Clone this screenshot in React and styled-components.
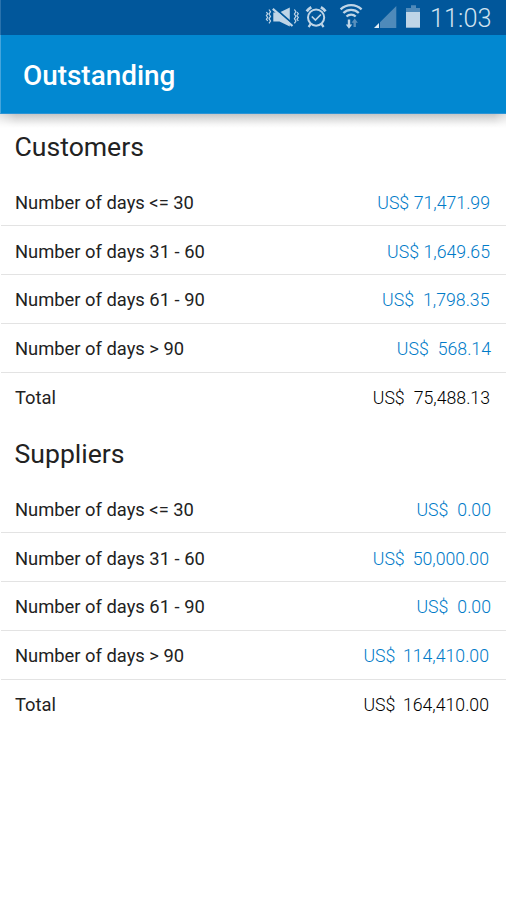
import React from "react";
import styled, { createGlobalStyle } from "styled-components";

const GlobalStyle = createGlobalStyle`
  * { box-sizing: border-box; }
  body {
    margin: 0;
    background: #fff;
    font-family: Roboto, "Liberation Sans", sans-serif;
    color: #222;
  }
`;

const Screen = styled.div`
  width: 506px;
  height: 900px;
  overflow: hidden;
  background: #fff;
`;

const StatusBar = styled.header`
  display: flex;
  height: 35px;
  padding-left: 264px;
  background: #01579b;
  border-left: 1px solid #2a72ac;
`;

const StatusIcons = styled.svg`
  flex: none;
  width: 160px;
  height: 35px;
`;

const Clock = styled.time`
  margin-left: 5px;
  font-size: 25.3px;
  font-weight: 300;
  line-height: 38px;
  color: #d2e3f0;
`;

const AppBar = styled.div`
  display: flex;
  align-items: center;
  height: 79px;
  padding: 3px 0 0 22px;
  background: #0288d1;
  border-left: 1px solid #45a5dc;
  border-bottom: 1px solid #2b94d6;
`;

const Title = styled.h1`
  margin: 0;
  font-size: 27.9px;
  font-weight: 500;
  line-height: 32px;
  color: #fff;
`;

const Shadow = styled.div`
  height: 14px;
  margin-bottom: -14px;
  background: linear-gradient(#c6c6c6, #dedede 35%, #f6f6f6 75%, #fff);
  mask-image: linear-gradient(90deg, rgba(0, 0, 0, 0.5), #000 16px, #000 calc(100% - 12px), rgba(0, 0, 0, 0.5));
`;

const Section = styled.section`
  height: 307px;
`;

const Heading = styled.h2`
  margin: 0;
  height: 63.5px;
  padding: 17px 0 0 14.5px;
  font-size: 26.6px;
  font-weight: 400;
  line-height: 32px;
`;

const Row = styled.div`
  display: flex;
  justify-content: space-between;
  align-items: center;
  height: 48.75px;
  margin-left: 1px;
  padding: 0 ${(p) => p.$inset}px 0 14px;
  border-bottom: 1px solid ${(p) => (p.$total ? "transparent" : "#e3e3e3")};
  line-height: 24px;
`;

const Label = styled.span`
  padding-top: 3px;
  font-size: 18.35px;
`;

const Amount = styled.span`
  display: flex;
  gap: ${(p) => p.$gap}px;
  padding-top: 3px;
  font-size: 17.7px;
  font-weight: 300;
  color: ${(p) => (p.$total ? "#000" : "#007bc8")};
`;

const sections = [
  {
    title: "Customers",
    rows: [
      ["Number of days <= 30", "71,471.99", 16, 4.5],
      ["Number of days 31 - 60", "1,649.65", 16, 4.5],
      ["Number of days 61 - 90", "1,798.35", 16.5, 9],
      ["Number of days > 90", "568.14", 15, 9],
      ["Total", "75,488.13", 16, 9],
    ],
  },
  {
    title: "Suppliers",
    rows: [
      ["Number of days <= 30", "0.00", 15, 9],
      ["Number of days 31 - 60", "50,000.00", 17, 8],
      ["Number of days 61 - 90", "0.00", 15, 9],
      ["Number of days > 90", "114,410.00", 17, 7.5],
      ["Total", "164,410.00", 17, 7.5],
    ],
  },
];

function Icons() {
  return (
    <StatusIcons viewBox="265 0 160 35" aria-hidden="true">
      <g fill="none" stroke="#bfd5e7" strokeWidth="1.2">
        <path d="M266.4 12l1.3 1.8-1.3 1.8 1.3 1.8-1.3 1.8 1.3 1.8M269 9.5l1.5 2.3-1.5 2.3 1.5 2.3-1.5 2.3 1.5 2.3-1.5 2.3" />
        <path d="M294.4 9.5l1.5 2.3-1.5 2.3 1.5 2.3-1.5 2.3 1.5 2.3-1.5 2.3M297 12l1.3 1.8-1.3 1.8 1.3 1.8-1.3 1.8 1.3 1.8" />
      </g>
      <path d="M273.3 12.5h6.2l10.3-5v19l-10.3-5h-6.2z" fill="#bfd5e7" />
      <path d="M273.5 7l20 17.5" stroke="#01579b" strokeWidth="2" />
      <path d="M272.8 8.8l19.7 17.2" stroke="#bfd5e7" strokeWidth="2.2" />
      <g fill="none" stroke="#bfd5e7">
        <circle cx="316.1" cy="17.6" r="8.1" strokeWidth="2" />
        <path d="M306.7 11.3a14 14 0 0 1 4.6-4M325.5 11.3a14 14 0 0 0-4.6-4" strokeWidth="2.8" />
        <path d="M310.6 24.2l-2 2.8M321.6 24.2l2 2.8" strokeWidth="2.2" />
        <path d="M311.8 16.5l3.6 3.5 5.5-5.5" strokeWidth="1.7" />
      </g>
      <g fill="none" stroke="#bfd5e7" strokeWidth="2.3">
        <path d="M340.6 9.3a15.2 15.2 0 0 1 21 0" />
        <path d="M343.4 13a11 11 0 0 1 15.4 0" />
        <path d="M346.5 16.5a6.6 6.6 0 0 1 9.2 0" />
      </g>
      <path d="M347.8 19.5h2.4v5h2l-3.2 4.3-3.2-4.3h2z" fill="#bfd5e7" />
      <path d="M353.5 27h2.4v-4.3h2l-3.2-4.2-3.2 4.2h2z" fill="#588fbc" />
      <path d="M380 22.2L396.3 6v22H380z" fill="#4f8aba" />
      <path d="M374 28l5-5v5z" fill="#e3edf5" />
      <path d="M411 5.3h5V8h4v4h-14V8h5z" fill="#4f8aba" />
      <path d="M406 12h14v15.7h-14z" fill="#bfd5e7" />
    </StatusIcons>
  );
}

export default function App() {
  return (
    <Screen>
      <GlobalStyle />
      <StatusBar>
        <Icons />
        <Clock>11:03</Clock>
      </StatusBar>
      <AppBar>
        <Title>Outstanding</Title>
      </AppBar>
      <Shadow />
      <main>
        {sections.map(({ title, rows }) => (
          <Section key={title}>
            <Heading>{title}</Heading>
            {rows.map(([label, value, inset, gap]) => {
              const total = label === "Total";
              return (
                <Row key={label} $inset={inset} $total={total}>
                  <Label>{label}</Label>
                  <Amount $gap={gap} $total={total}>
                    <span>US$</span>
                    <span>{value}</span>
                  </Amount>
                </Row>
              );
            })}
          </Section>
        ))}
      </main>
    </Screen>
  );
}
